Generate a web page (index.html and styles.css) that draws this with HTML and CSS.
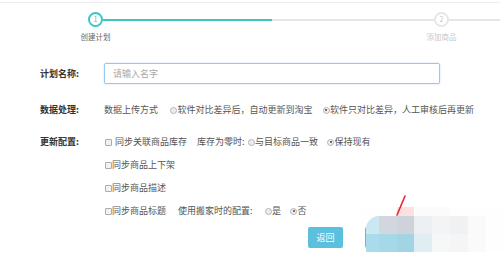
FILE: index.html
```html
<!DOCTYPE html>
<html lang="zh-CN">
<head>
<meta charset="utf-8">
<title>创建计划</title>
<link rel="stylesheet" href="styles.css">
</head>
<body>
<div class="page">
  <div class="topline"></div>
  <div class="stepper">
    <div class="step active"><div class="dot">1</div><div class="step-label">创建计划</div></div>
    <div class="bar bar-done"></div>
    <div class="bar bar-todo"></div>
    <div class="step"><div class="dot">2</div><div class="step-label">添加商品</div></div>
    <div class="bar bar-tail"></div>
  </div>

  <div class="form">
    <div class="row row-name">
      <div class="label">计划名称:</div>
      <input class="text-input" type="text" placeholder="请输入名字">
    </div>

    <div class="row row-data">
      <div class="label">数据处理:</div>
      <span class="plain gap12">数据上传方式</span>
      <span class="opt gap10"><i class="radio"></i>软件对比差异后，自动更新到淘宝</span>
      <span class="opt"><i class="radio checked"></i>软件只对比差异，人工审核后再更新</span>
    </div>

    <div class="row row-update">
      <div class="label">更新配置:</div>
      <div class="options">
        <div class="line">
          <i class="check first"></i><span class="plain gap10">同步关联商品库存</span>
          <span class="plain gap3">库存为零时:</span>
          <span class="opt gap9"><i class="radio"></i>与目标商品一致</span>
          <span class="opt"><i class="radio checked"></i>保持现有</span>
        </div>
        <div class="line"><i class="check"></i><span class="plain">同步商品上下架</span></div>
        <div class="line"><i class="check"></i><span class="plain">同步商品描述</span></div>
        <div class="line">
          <i class="check"></i><span class="plain gap12">同步商品标题</span>
          <span class="plain gap12">使用搬家时的配置:</span>
          <span class="opt gap9"><i class="radio"></i>是</span>
          <span class="opt"><i class="radio checked"></i>否</span>
        </div>
      </div>
    </div>

    <div class="buttons">
      <div class="btn">返回</div>
      <div class="btn">下一步</div>
    </div>
  </div>

  <div class="mosaic">
    <div class="m m-w"></div><div class="m m-w"></div><div class="m m-pink"></div><div class="m m-f1"></div><div class="m m-f1"></div><div class="m m-w"></div><div class="m m-w"></div><div class="m m-w"></div>
    <div class="m m-arc"></div><div class="m m-g1"></div><div class="m m-g2"></div><div class="m m-g3"></div><div class="m m-g4"></div><div class="m m-g5"></div><div class="m m-f2"></div><div class="m m-w"></div>
    <div class="m m-b2"></div><div class="m m-b3"></div><div class="m m-g6"></div><div class="m m-g7"></div><div class="m m-g8"></div><div class="m m-f2"></div><div class="m m-w"></div>
  </div>
  <svg class="pen" width="14" height="24" viewBox="0 0 14 24"><path d="M3 21 L11 2" stroke="#e8262a" stroke-width="1.6" fill="none" stroke-linecap="round"/></svg>
</div>
</body>
</html>
```

FILE: styles.css
```css
html, body {
  margin: 0;
  padding: 0;
  background: #fff;
}
body {
  font-family: "Noto Sans CJK SC", "Noto Sans", sans-serif;
  font-size: 9px;
  color: #555;
}
.page {
  position: relative;
  width: 503px;
  height: 280px;
  overflow: hidden;
}
.topline {
  margin-top: 2px;
  width: 500px;
  height: 1px;
  background: #ececec;
}

/* stepper */
.stepper {
  display: flex;
  align-items: flex-start;
  padding-left: 75.5px;
  margin-top: 9px;
}
.step {
  width: 40px;
  display: flex;
  flex-direction: column;
  align-items: center;
}
.dot {
  width: 15px;
  height: 15px;
  box-sizing: border-box;
  border: 2px solid #e6e6e6;
  border-radius: 50%;
  font-size: 7px;
  line-height: 11px;
  text-align: center;
  color: #c8c8c8;
  background: #fff;
}
.step.active .dot {
  border-color: #3ec5c1;
  color: #3ec5c1;
}
.step-label {
  margin-top: 5px;
  font-size: 7.5px;
  line-height: 9px;
  white-space: nowrap;
  color: #c8c8c8;
}
.step.active .step-label {
  color: #666;
}
.bar {
  height: 1.5px;
  margin-top: 7px;
  background: #e6e6e6;
}
.bar-done {
  width: 169px;
  margin-left: -12.5px;
  background: #3ec5c1;
}
.bar-todo {
  width: 162px;
  margin-right: -12.5px;
}
.bar-tail {
  width: 51px;
  margin-left: -12.5px;
}

/* form */
.form {
  margin-top: 22px;
  padding-left: 40px;
}
.row {
  display: flex;
  align-items: center;
  white-space: nowrap;
}
.label {
  width: 64px;
  flex-shrink: 0;
  font-weight: bold;
  color: #333;
  line-height: 14px;
}
.row-name {
  height: 21px;
}
.text-input {
  width: 336px;
  height: 21px;
  box-sizing: border-box;
  margin: 0;
  padding: 0 0 0 8px;
  border: 1px solid #95c8f2;
  border-radius: 2px;
  box-shadow: 0 0 2px rgba(110, 175, 235, 0.45);
  font-family: inherit;
  font-size: 9px;
  color: #555;
  outline: none;
}
.text-input::placeholder {
  color: #a8a8a8;
}
.row-data {
  margin-top: 19px;
  height: 14px;
}
.row-update {
  margin-top: 18px;
  align-items: flex-start;
}
.options {
  display: flex;
  flex-direction: column;
  gap: 9px;
}
.line {
  display: flex;
  align-items: center;
  height: 14px;
}
.plain, .opt {
  line-height: 14px;
}
.opt {
  display: flex;
  align-items: center;
}
.gap3 { margin-right: 3px; }
.gap9 { margin-right: 9px; }
.gap10 { margin-right: 10px; }
.gap12 { margin-right: 12px; }

.radio {
  position: relative;
  display: inline-block;
  width: 7px;
  height: 7px;
  box-sizing: border-box;
  border: 1px solid #b4b4b4;
  border-radius: 50%;
  background: #ededed;
  margin-right: 0.5px;
}
.radio.checked::after {
  content: "";
  position: absolute;
  left: 1.5px;
  top: 1.5px;
  width: 2px;
  height: 2px;
  border-radius: 50%;
  background: #444;
}
.check {
  display: inline-block;
  width: 7px;
  height: 7px;
  box-sizing: border-box;
  border: 1px solid #ababab;
  border-radius: 1px;
  background: #f2f2f2;
  margin-left: 1px;
  margin-right: 0;
}
.check.first {
  margin-right: 3px;
}

.buttons {
  display: flex;
  gap: 22px;
  margin-top: 9px;
  padding-left: 268px;
}
.btn {
  width: 35px;
  height: 21px;
  border-radius: 2px;
  background: #5bc0de;
  color: #fff;
  font-size: 9px;
  display: flex;
  align-items: center;
  justify-content: center;
}

/* pixelated overlay over the lower-right corner */
.mosaic {
  position: absolute;
  left: 361px;
  top: 207px;
  display: grid;
  grid-template-columns: 18px 18px 17px 18px 18px 18px 18px 18px;
  grid-template-rows: 9px 18px 18px;
}
.m { background: transparent; }
.m-w { background: #fefefe; }
.m-pink { background: #fde1e1; }
.m-f1 { background: #fbfbfb; }
.m-f2 { background: #fafafa; }
.m-arc {
  grid-row: 2 / 4;
  margin-left: 5px;
  border-top-left-radius: 14px;
  background: linear-gradient(#c9e8f2 0 50%, #a9dbea 50% 100%);
}
.m-g1 { background: #d2d7de; }
.m-g2 { background: #ced3db; }
.m-g3 { background: #edf0f2; }
.m-g4 { background: #f3f4f5; }
.m-g5 { background: #f0f1f2; }
.m-b2 { background: #a6d9e8; }
.m-b3 { background: #a2d4e3; }
.m-g6 { background: #e0eef4; }
.m-g7 { background: #f6f7f7; }
.m-g8 { background: #f5f5f5; }
.pen {
  position: absolute;
  left: 394px;
  top: 194px;
}
```
